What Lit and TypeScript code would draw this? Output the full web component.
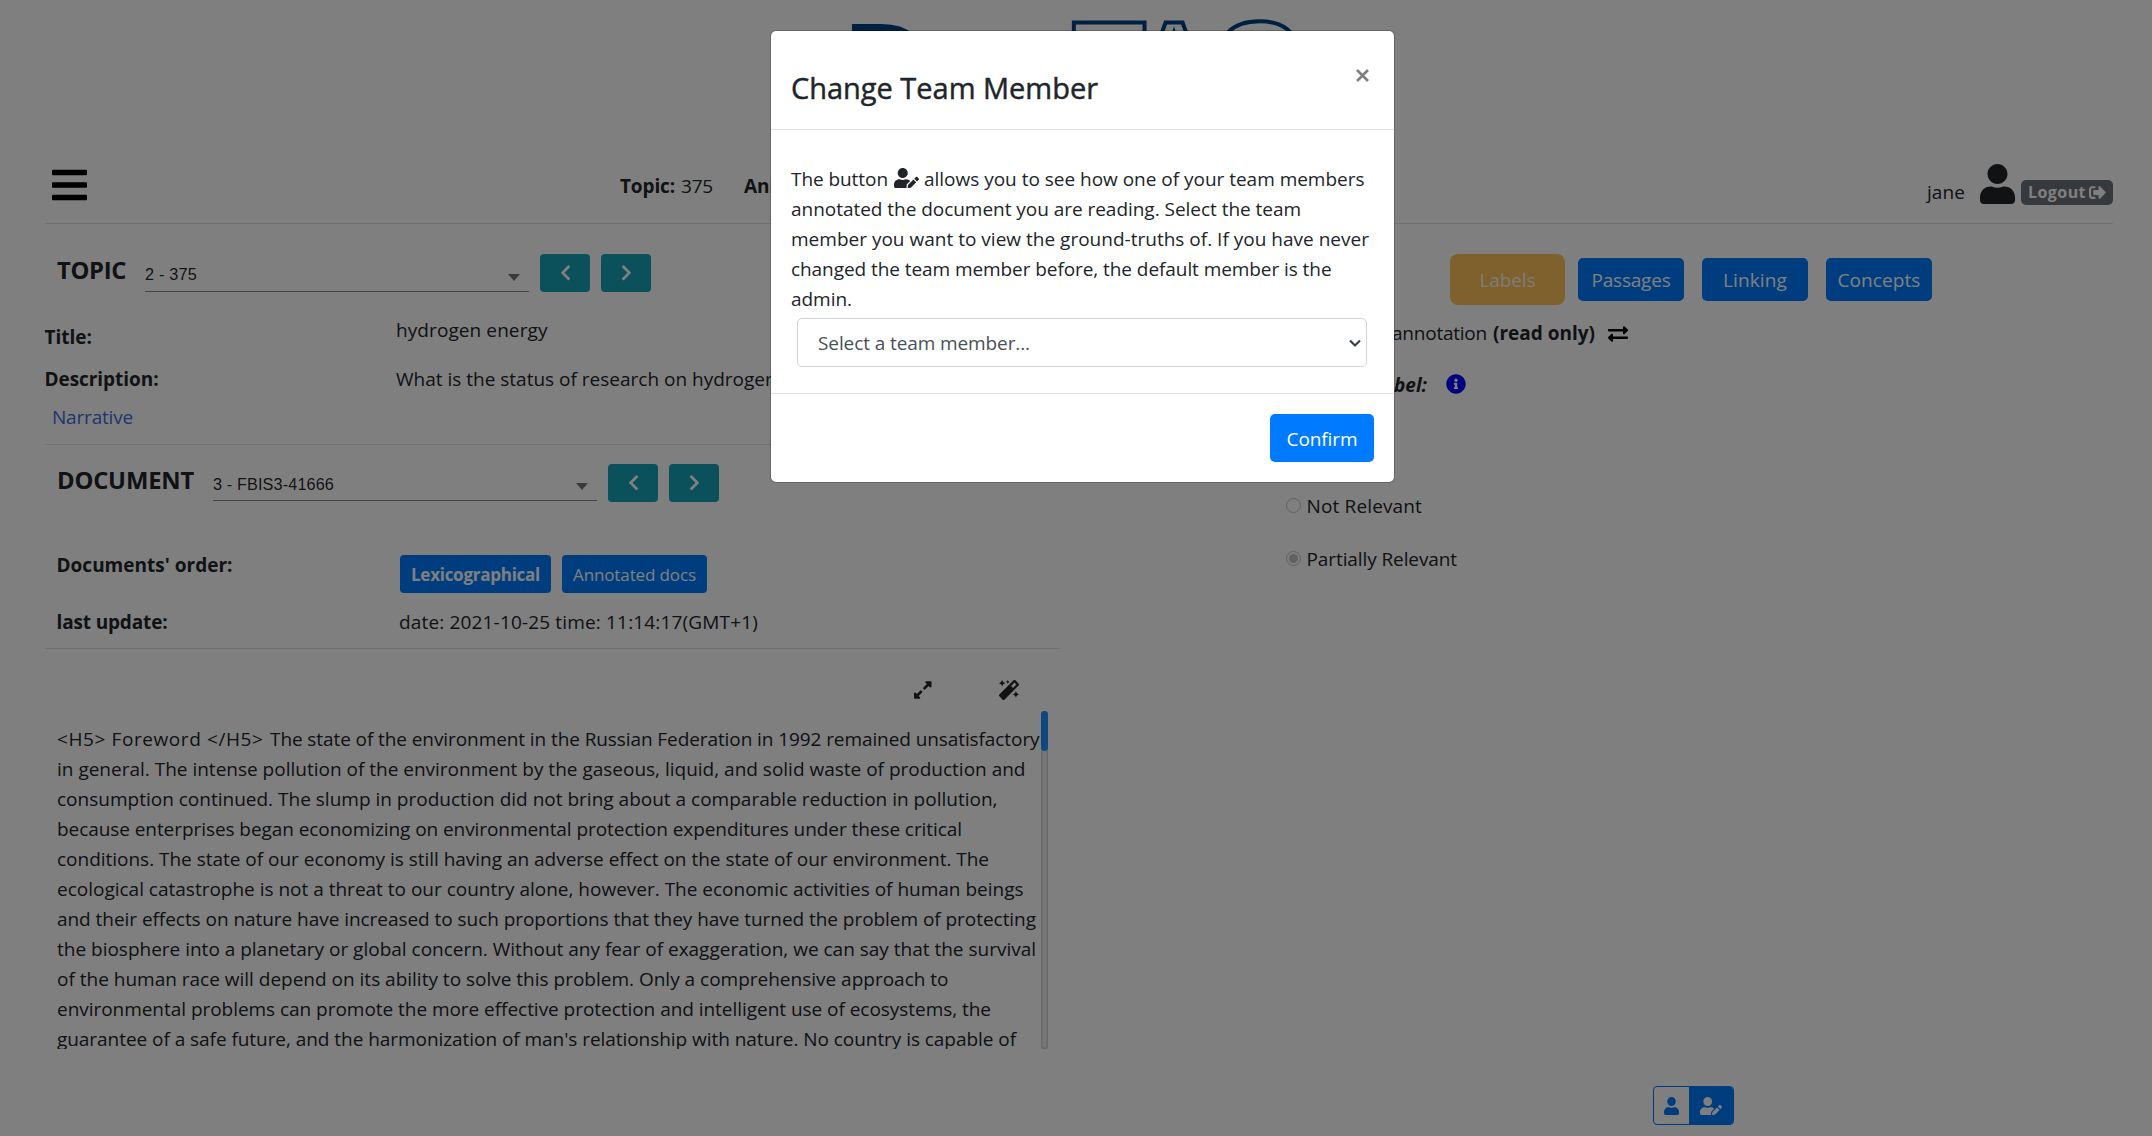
import { LitElement, html, css, svg } from "lit";
import { customElement } from "lit/decorators.js";

const PATHS = {
  bars: "M16 132h416c8.837 0 16-7.163 16-16V76c0-8.837-7.163-16-16-16H16C7.163 60 0 67.163 0 76v40c0 8.837 7.163 16 16 16zm0 160h416c8.837 0 16-7.163 16-16v-40c0-8.837-7.163-16-16-16H16c-8.837 0-16 7.163-16 16v40c0 8.837 7.163 16 16 16zm0 160h416c8.837 0 16-7.163 16-16v-40c0-8.837-7.163-16-16-16H16c-8.837 0-16 7.163-16 16v40c0 8.837 7.163 16 16 16z",
  user: "M224 256c70.7 0 128-57.3 128-128S294.7 0 224 0 96 57.3 96 128s57.3 128 128 128zm89.6 32h-16.7c-22.2 10.2-46.9 16-72.9 16s-50.6-5.8-72.9-16h-16.7C60.2 288 0 348.2 0 422.4V464c0 26.5 21.5 48 48 48h352c26.5 0 48-21.5 48-48v-41.6c0-74.2-60.2-134.4-134.4-134.4z",
  userEdit: "M224 256c70.7 0 128-57.3 128-128S294.7 0 224 0 96 57.3 96 128s57.3 128 128 128zm89.6 32h-16.7c-22.2 10.2-46.9 16-72.9 16s-50.6-5.8-72.9-16h-16.7C60.2 288 0 348.2 0 422.4V464c0 26.5 21.5 48 48 48h274.9c-2.4-6.8-3.4-14-2.6-21.3l6.8-60.9 1.2-11.1 7.9-7.9 77.3-77.3c-24.5-27.7-60-45.5-99.9-45.5zm45.3 145.3l-6.8 61c-1.1 10.2 7.5 18.8 17.6 17.6l60.9-6.8 137.9-137.9-71.7-71.7-137.9 137.8zM633 268.9L595.1 231c-9.3-9.3-24.5-9.3-33.8 0l-37.8 37.8-4.1 4.1 71.8 71.7 41.8-41.8c9.3-9.4 9.3-24.5 0-33.9z",
  signOut: "M497 273L329 441c-15 15-41 4.5-41-17v-96H152c-13.3 0-24-10.7-24-24v-96c0-13.3 10.7-24 24-24h136V88c0-21.4 25.9-32 41-17l168 168c9.3 9.4 9.3 24.6 0 34zM192 436v-40c0-6.6-5.4-12-12-12H96c-17.7 0-32-14.3-32-32V160c0-17.7 14.3-32 32-32h84c6.6 0 12-5.4 12-12V76c0-6.6-5.4-12-12-12H96c-53 0-96 43-96 96v192c0 53 43 96 96 96h84c6.6 0 12-5.4 12-12z",
  chevron: "M34.52 239.03L228.87 44.69c9.37-9.37 24.57-9.37 33.94 0l22.67 22.67c9.36 9.36 9.37 24.52.04 33.9L131.49 256l154.02 154.75c9.34 9.38 9.32 24.54-.04 33.9l-22.67 22.67c-9.37 9.37-24.57 9.37-33.94 0L34.52 272.97c-9.37-9.37-9.37-24.57 0-33.94z",
  info: "M256 8C119.043 8 8 119.083 8 256c0 136.997 111.043 248 248 248s248-111.003 248-248C504 119.083 392.957 8 256 8zm0 110c23.196 0 42 18.804 42 42s-18.804 42-42 42-42-18.804-42-42 18.804-42 42-42zm56 254c0 6.627-5.373 12-12 12h-88c-6.627 0-12-5.373-12-12v-24c0-6.627 5.373-12 12-12h12v-64h-12c-6.627 0-12-5.373-12-12v-24c0-6.627 5.373-12 12-12h64c6.627 0 12 5.373 12 12v100h12c6.627 0 12 5.373 12 12v24z",
  exchange: "M0 168v-16c0-13.255 10.745-24 24-24h360V80c0-21.367 25.899-32.042 40.971-16.971l80 80c9.372 9.373 9.372 24.569 0 33.941l-80 80C409.956 271.982 384 261.456 384 240v-48H24c-13.255 0-24-10.745-24-24zm488 152H128v-48c0-21.314-25.862-32.08-40.971-16.971l-80 80c-9.372 9.373-9.372 24.569 0 33.941l80 80C102.057 463.997 128 453.437 128 432v-48h360c13.255 0 24-10.745 24-24v-16c0-13.255-10.745-24-24-24z",
  magic: "M224 96l16-32 32-16-32-16-16-32-16 32-32 16 32 16 16 32zM80 160l26.66-53.33L160 80l-53.34-26.67L80 0 53.34 53.33 0 80l53.34 26.67L80 160zm352 128l-26.66 53.33L352 368l53.34 26.67L432 448l26.66-53.33L512 368l-53.34-26.67L432 288zm70.62-193.77L417.77 9.38C411.53 3.12 403.34 0 395.15 0c-8.19 0-16.38 3.12-22.63 9.38L9.38 372.52c-12.5 12.5-12.5 32.76 0 45.25l84.85 84.85c6.25 6.25 14.44 9.37 22.62 9.37 8.19 0 16.38-3.12 22.63-9.37l363.14-363.15c12.5-12.48 12.5-32.75 0-45.24zM359.45 203.46l-50.91-50.91 86.6-86.6 50.91 50.91-86.6 86.6z",
  expand: "M212.686 315.314L120 408l32.922 31.029c15.12 15.12 4.412 40.971-16.97 40.971h-112C10.697 480 0 469.255 0 456V344c0-21.382 25.803-32.09 40.922-16.971L72 360l92.686-92.686c6.248-6.248 16.379-6.248 22.627 0l25.373 25.373c6.249 6.248 6.249 16.378 0 22.627zm22.628-118.628L328 104l-32.922-31.029C279.958 57.851 290.666 32 312.048 32h112C437.303 32 448 42.745 448 56v112c0 21.382-25.803 32.09-40.922 16.971L376 152l-92.686 92.686c-6.248 6.248-16.379 6.248-22.627 0l-25.373-25.373c-6.249-6.248-6.249-16.378 0-22.627z",
};

const icon = (name: keyof typeof PATHS, w: number, h: number, vw: number, flip = false) => html`
  <svg class=${flip ? "ico flip" : "ico"} width=${w} height=${h} viewBox="0 0 ${vw} 512" preserveAspectRatio="none">
    ${svg`<path fill="currentColor" d=${PATHS[name]}></path>`}
  </svg>`;

/* Each line of the document: runs of text with their measure in pixels. */
const LINES: [string, number][][] = [
  [["<H5> Foreword </H5>", 206.5], ["The state of the environment in the Russian Federation in 1992 remained unsatisfactory", 769.5]],
  [["in general. The intense pollution of the environment by the gaseous, liquid, and solid waste of production and", 968.5]],
  [["consumption continued. The slump in production did not bring about a comparable reduction in pollution,", 940.5]],
  [["because enterprises began economizing on environmental protection expenditures under these critical", 905]],
  [["conditions. The state of our economy is still having an adverse effect on the state of our environment. The", 932]],
  [["ecological catastrophe is not a threat to our country alone, however. The economic activities of human beings", 966.5]],
  [["and their effects on nature have increased to such proportions that they have turned the problem of protecting", 979]],
  [["the biosphere into a planetary or global concern. Without any fear of exaggeration, we can say that the survival", 979]],
  [["of the human race will depend on its ability to solve this problem. Only a comprehensive approach to", 891.5]],
  [["environmental problems can promote the more effective protection and intelligent use of ecosystems, the", 934]],
  [["guarantee of a safe future, and the harmonization of man's relationship with nature. No country is capable of", 959]],
];

@customElement("app-root")
export class AppRoot extends LitElement {
  static styles = css`
    :host { display: block; width: 2152px; height: 1136px; overflow: hidden; position: relative;
      background: #fff; color: #212529; font: 19px/30px "Open Sans", "Noto Sans", sans-serif; }
    * { box-sizing: border-box; }
    [data-w] { display: inline-block; white-space: nowrap; }
    .ico { display: block; flex: none; }
    .flip { transform: scaleX(-1); }
    b { font-weight: 700; }
    .row { display: flex; align-items: flex-start; }
    .page { padding: 0 39px 0 45px; height: 1136px; }
    .logo { display: block; height: 150px; width: 500px; margin-left: 795px; }
    .logo text { font-family: "Liberation Sans", Arial, sans-serif; font-weight: 700; fill: #004085; }
    .logo .outline { fill: #fff; stroke: #004085; stroke-width: 4; }
    .bar { height: 74px; border-bottom: 1px solid rgba(0,0,0,.1); padding-left: 7px; }
    .burger { margin-top: 15px; color: #000; }
    .crumb { margin: 21px 0 0 533px; width: 1307px; }
    .crumb .val { margin: 0 31px 0 6px; }
    .jane { margin-top: 27px; width: 38px; }
    .avatar { margin: 14px 6px 0 15px; }
    .badge { margin-top: 30px; width: 92px; height: 25px; border-radius: 5px; background: #6c757d; color: #fff;
      font-size: 16px; line-height: 24px; font-weight: 700; padding-left: 7px; gap: 3px; }
    .badge .ico { margin-top: 4px; }
    .cols { display: grid; grid-template-columns: 1015px 1fr; }
    .head { font-size: 23.8px; font-weight: 700; }
    .topic-row { height: 91px; padding: 30px 0 0 12px; }
    .topic-row .head { margin-top: 1px; }
    .doc-row { height: 105px; padding: 19px 0 0 12px; }
    .doc-row .head { margin-top: 1px; }
    .select { height: 38px; width: 384px; margin-left: 19px; border-bottom: 1px solid #8a8a8a; font: 16.25px/30px "Liberation Sans", Arial, sans-serif;
      color: rgba(0,0,0,.87); display: flex; justify-content: space-between; }
    .select .txt { padding-top: 5px; }
    .caret { width: 0; height: 0; border: 6.5px solid transparent; border-bottom: 0; border-top: 7px solid #757575; margin: 20px 9px 0 0; }
    .doc-row .select { height: 37px; }
    .doc-row .caret { margin-top: 19px; }
    .teal { width: 50px; height: 38px; border-radius: 4px; background: #17a2b8; color: #fff; margin-left: 11px; display: flex; align-items: center; justify-content: center; }
    .kv { display: grid; grid-template-columns: 351px 1fr; }
    .kv > b { margin-left: -.5px; }
    .title { height: 49px; }
    .title .k { padding-top: 7px; }
    .desc { height: 38px; }
    .narr { height: 43px; padding-left: 7px; color: #4169e1; border-bottom: 1px solid rgba(0,0,0,.1); }
    .order { height: 57px; grid-template-columns: 343px 1fr; padding-left: 12px; }
    .order .btns { display: flex; gap: 11px; padding-top: 5px; }
    .btn { background: #007bff; color: #fff; border-radius: 4px; display: flex; justify-content: center; align-items: center; }
    .btn.sm { height: 38px; font-size: 17px; width: 145px; padding-top: 1px; }
    .btn.sm.wide { width: 151px; font-weight: 700; }
    .update { height: 42px; grid-template-columns: 342px 1fr; padding-left: 12px; border-bottom: 1px solid rgba(0,0,0,.1); }
    .tools { height: 62px; padding: 31px 0 0 869px; gap: 67px; }
    .scroller { height: 338px; width: 1003px; overflow: hidden; padding-left: 12px; display: flex; justify-content: space-between; }
    .lines { padding-top: 13px; white-space: nowrap; }
    .line { height: 30px; display: flex; gap: 6.5px; }
    .track { width: 7px; height: 338px; border-radius: 4px; background: #f0f0f0; box-shadow: inset 0 0 3px rgba(0,0,0,.35); flex: none; }
    .thumb { height: 40px; border-radius: 4px; background: #1e90ff; }
    .right { padding-left: 220px; }
    .tabs { padding: 30px 0 0 170px; gap: 18px; }
    .tab { width: 106px; height: 43px; margin-top: 4px; border-radius: 5px; }
    .labels { width: 115px; height: 51px; border-radius: 8px; margin: 0 -5px 0 0; background: #ffc35a; color: rgba(255,255,255,.9); display: flex; align-items: center; justify-content: center; }
    .anno { padding: 13px 0 0 112px; }
    .anno b { margin-left: 6px; }
    .anno .ico { margin: 6px 0 0 13px; color: #000; }
    .lab { padding-top: 22px; }
    .lab .t { width: 147px; text-align: right; font-style: italic; font-weight: 700; }
    .lab .ico { color: #0000ff; margin: 4px 0 0 19px; }
    .radios { padding-top: 91px; }
    .radio { height: 53px; padding-left: 6px; gap: 5.5px; }
    .dot { width: 15px; height: 15px; border-radius: 50%; border: 1px solid #c2c2c2; margin-top: 7px; display: flex; align-items: center; justify-content: center; }
    .dot.on::after { content: ""; width: 9px; height: 9px; border-radius: 50%; background: #c2c2c2; }
    .switch { position: absolute; left: 1653px; top: 1086px; width: 81px; height: 39px; border: 1px solid #007bff; border-radius: 4px; overflow: hidden; color: #007bff; display: flex; }
    .switch .one { width: 35px; padding: 10px 0 0 10px; }
    .switch .two { flex: 1; background: #007bff; color: #fff; padding: 10px 0 0 11px; }
    .shade { position: absolute; inset: 0; background: rgba(0,0,0,.5); padding: 30px 0 0 770px; }
    .modal { width: 625px; height: 453px; background: #fff; border: 1px solid rgba(0,0,0,.2); background-clip: padding-box; border-radius: 6px; }
    .mh { height: 99px; border-bottom: 1px solid #dee2e6; display: flex; justify-content: space-between; padding: 34px 25px 0 20px; }
    .mh h5 { margin: 0; font: 500 29px/45px "Open Sans", sans-serif; -webkit-text-stroke: .45px #212529; }
    .mh svg { margin-top: 4px; }
    .mb { height: 264px; padding: 34px 0 0 20px; border-bottom: 1px solid #dee2e6; }
    .mb .ico { margin: 4px 5px 0 6px; }
    .picker { margin: 4px 0 0 6px; width: 570px; height: 49px; border: 1px solid #ced4da; border-radius: 5px; color: #495057;
      padding: 9px 5px 0 20px; display: flex; justify-content: space-between; }
    .picker svg { margin-top: 11px; }
    .mf { display: flex; justify-content: flex-end; padding: 20px 20px 0 0; }
    .confirm { width: 104px; height: 48px; border-radius: 5px; padding-top: 2px; }
  `;

  /* Tracks every measured run so that it fills its given width. */
  updated() {
    this.renderRoot.querySelectorAll<HTMLElement>("[data-w]").forEach((el) => {
      const n = (el.textContent ?? "").length;
      el.style.letterSpacing = "0px";
      el.style.letterSpacing = `${(Number(el.dataset.w) - el.getBoundingClientRect().width) / n}px`;
    });
  }

  private t(text: string, w: number) {
    return html`<span data-w=${w}>${text}</span>`;
  }

  private arrows() {
    return html`<div class="teal">${icon("chevron", 11, 17.5, 320)}</div>
      <div class="teal">${icon("chevron", 11, 17.5, 320, true)}</div>`;
  }

  render() {
    return html`
      <div class="page">
        <svg class="logo" viewBox="0 0 500 150">
          <text x="4" y="106" font-size="119">D</text>
          <text class="outline" x="232.5" y="106" font-size="120">T</text>
          <text class="outline" x="298" y="92" font-size="100" textLength="72">A</text>
          <text class="outline" x="372" y="106" font-size="121">G</text>
        </svg>
        <div class="bar row">
          <div class="burger">${icon("bars", 35, 40, 448)}</div>
          <div class="crumb row"><b>${this.t("Topic:", 55)}</b><span class="val">${this.t("375", 32)}</span><b>Annotation</b></div>
          <div class="jane">${this.t("jane", 38)}</div>
          <div class="avatar">${icon("user", 35, 40, 448)}</div>
          <div class="badge row">${this.t("Logout", 58)}${icon("signOut", 17, 17, 512)}</div>
        </div>
        <div class="cols">
          <div>
            <div class="topic-row row">
              <div class="head">${this.t("TOPIC", 69)}</div>
              <div class="select"><span class="txt">${this.t("2 - 375", 52)}</span><span class="caret"></span></div>
              ${this.arrows()}
            </div>
            <div class="kv title"><b class="k">${this.t("Title:", 47.5)}</b><span>${this.t("hydrogen energy", 151.5)}</span></div>
            <div class="kv desc"><b>${this.t("Description:", 114)}</b><span>What is the status of research on hydrogen</span></div>
            <div class="narr">${this.t("Narrative", 81)}</div>
            <div class="doc-row row">
              <div class="head">${this.t("DOCUMENT", 137)}</div>
              <div class="select"><span class="txt">${this.t("3 - FBIS3-41666", 121)}</span><span class="caret"></span></div>
              ${this.arrows()}
            </div>
            <div class="kv order"><b>${this.t("Documents' order:", 176)}</b>
              <div class="btns"><div class="btn sm wide">${this.t("Lexicographical", 129)}</div><div class="btn sm">${this.t("Annotated docs", 123)}</div></div>
            </div>
            <div class="kv update"><b>${this.t("last update:", 111)}</b><span>${this.t("date: 2021-10-25 time: 11:14:17(GMT+1)", 359)}</span></div>
            <div class="tools row">${icon("expand", 17.5, 20, 448)}${icon("magic", 20, 20, 512)}</div>
            <div class="scroller">
              <div class="lines">${LINES.map((runs) => html`<div class="line">${runs.map(([s, w]) => this.t(s, w))}</div>`)}</div>
              <div class="track"><div class="thumb"></div></div>
            </div>
          </div>
          <div class="right">
            <div class="tabs row">
              <div class="labels">${this.t("Labels", 56)}</div>
              <div class="btn tab">${this.t("Passages", 79)}</div>
              <div class="btn tab">${this.t("Linking", 64)}</div>
              <div class="btn tab">${this.t("Concepts", 83)}</div>
            </div>
            <div class="anno row">${this.t("annotation", 95)}<b>${this.t("(read only)", 102)}</b>${icon("exchange", 20, 20, 512)}</div>
            <div class="lab row"><span class="t">Label:</span>${icon("info", 20, 20, 512)}</div>
            <div class="radios">
              <div class="radio row"><span class="dot"></span>${this.t("Not Relevant", 115.5)}</div>
              <div class="radio row"><span class="dot on"></span>${this.t("Partially Relevant", 150.5)}</div>
            </div>
          </div>
        </div>
      </div>
      <div class="switch">
        <div class="one">${icon("user", 15, 18, 448)}</div>
        <div class="two">${icon("userEdit", 22, 18, 640)}</div>
      </div>
      <div class="shade">
        <div class="modal">
          <div class="mh">
            <h5>${this.t("Change Team Member", 307)}</h5>
            <svg width="13" height="13" viewBox="0 0 13 13"><path d="M1 1l11 11M12 1L1 12" stroke="#7f7f7f" stroke-width="2.6"></path></svg>
          </div>
          <div class="mb">
            <div class="row">${this.t("The button", 97)}${icon("userEdit", 25, 20, 640)}${this.t("allows you to see how one of your team members", 440.5)}</div>
            <div>${this.t("annotated the document you are reading. Select the team", 510)}</div>
            <div>${this.t("member you want to view the ground-truths of. If you have never", 578)}</div>
            <div>${this.t("changed the team member before, the default member is the", 540.5)}</div>
            <div>${this.t("admin.", 61)}</div>
            <div class="picker"><span>${this.t("Select a team member...", 212)}</span>
              <svg width="12" height="9" viewBox="0 0 12 9"><path d="M1 1.5l5 5 5-5" fill="none" stroke="#3c4248" stroke-width="2.2"></path></svg></div>
          </div>
          <div class="mf"><div class="btn confirm">${this.t("Confirm", 71)}</div></div>
        </div>
      </div>`;
  }
}
